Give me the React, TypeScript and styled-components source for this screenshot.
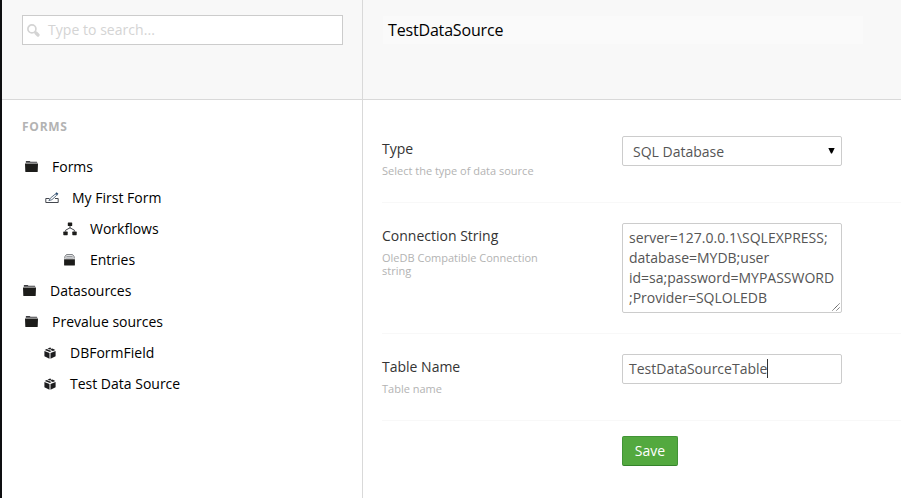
import React from 'react';
import styled, { createGlobalStyle } from 'styled-components';

const GlobalStyle = createGlobalStyle`
  *, *::before, *::after { box-sizing: border-box; }
  body {
    margin: 0;
    background: #fff;
    overflow: hidden;
    font-family: 'Open Sans', 'Noto Sans', sans-serif;
    font-size: 14px;
    line-height: 20px;
    color: #000;
  }
`;

const Shell = styled.div`
  display: grid;
  grid-template-columns: 2px 361px 1fr;
  width: 100vw;
  height: 100vh;
`;

const Rail = styled.div`
  background: #0e0f11;
`;

const Sidebar = styled.aside`
  border-right: 1px solid #d9d9d9;
`;

const Header = styled.header`
  height: 100px;
  background: #f8f8f8;
  border-bottom: 1px solid #d9d9d9;
  padding: 15px 19px 0 20px;
`;

const TitleHeader = styled(Header)`
  padding: 16px 38px 0 20px;
`;

const SearchBox = styled.div`
  display: flex;
  align-items: center;
  width: 321px;
  height: 30px;
  padding-left: 4px;
  background: #fff;
  border: 1px solid #ccc;
  color: #d4d4d4;

  svg { margin-top: 1px; }
`;

const SearchText = styled.span`
  margin-left: 8px;
  letter-spacing: 0.04px;
`;

const Title = styled.div`
  height: 28px;
  padding: 4px 5px;
  background: #fafafa;
  font-size: 16px;
  line-height: 20px;
  letter-spacing: -0.17px;
`;

const Section = styled.h5`
  margin: 17px 0 14px 20px;
  font-size: 12px;
  line-height: 20px;
  font-weight: 700;
  letter-spacing: 0.75px;
  color: #b3b3b3;
`;

const Tree = styled.ul`
  margin: 0;
  padding: 0;
  list-style: none;
`;

const Node = styled.li<{ $indent: number; $gap: number }>`
  display: flex;
  align-items: center;
  height: 31px;
  padding-left: ${(p) => p.$indent}px;
  gap: ${(p) => p.$gap}px;

  svg { flex: none; }
`;

const Main = styled.main`
  min-width: 0;
`;

const Form = styled.div`
  padding: 16px 0 0 19px;
`;

const Row = styled.div<{ $height: number }>`
  display: flex;
  height: ${(p) => p.$height}px;
  padding-top: 20px;
  border-bottom: 1px solid #f8f8f8;
`;

const LabelColumn = styled.div`
  width: 240px;
  padding-top: 3px;
`;

const Label = styled.div`
  color: #343434;
`;

const Help = styled.div`
  width: 170px;
  margin-top: 5px;
  font-size: 11px;
  line-height: 13px;
  color: #b3b3b3;
`;

const Control = styled.div<{ $tall?: boolean }>`
  position: relative;
  width: 220px;
  height: ${(p) => (p.$tall ? 90 : 30)}px;
  padding: 4px 6px;
  background: #fff;
  border: 1px solid #ccc;
  border-radius: 2px;
  color: #555;
  white-space: pre;
`;

const Select = styled(Control)`
  display: flex;
  justify-content: space-between;
  padding: 5px 6px 0 10px;

  svg { margin-top: 6px; }
`;

const TextInput = styled(Control)`
  display: flex;
`;

const Caret = styled.span`
  width: 1px;
  height: 19px;
  background: #333;
`;

const Grip = styled.svg`
  position: absolute;
  right: 1px;
  bottom: 1px;
`;

const Actions = styled.div`
  padding: 15px 0 0 240px;
`;

const SaveButton = styled.button`
  display: block;
  width: 56px;
  height: 30px;
  padding: 0;
  border: 1px solid #429436;
  border-bottom-color: #34832b;
  border-radius: 2px;
  background: #53a93f;
  color: #fff;
  font: inherit;
`;

const SearchIcon = () => (
  <svg width="13" height="13" viewBox="0 0 13 13" fill="none" stroke="#d4d4d4">
    <circle cx="4.9" cy="4.9" r="4" strokeWidth="1.7" />
    <path d="M7.7 7.7l1.6 1.6" strokeWidth="2" />
    <path d="M9 9l2 2" strokeWidth="3.2" strokeLinecap="round" />
  </svg>
);

const FolderIcon = () => (
  <svg width="13" height="11" viewBox="0 0 13 11" fill="#1c1c1a">
    <path d="M.8 1.8V.5q0-.5.5-.5h3.4l.8.7h6.2q.5 0 .5.5v.6z" fill="#3c3c40" />
    <path d="M0 2.4h13l-.3 8q0 .6-.6.6H.9q-.6 0-.6-.6z" />
  </svg>
);

const FormIcon = () => (
  <svg width="14" height="12" viewBox="0 0 14 12" fill="none" stroke="#44474e">
    <path d="M4.4 6.5H.8v4h12.4v-4H10" />
    <path d="M3.9 8.6l1.5-2.5 5-4.1 1.3 1.3-4.8 4.4z" stroke="#4a5f76" strokeWidth=".9" />
    <path d="M10.9.9l1.9 1.6" strokeWidth="1.8" stroke="#2c4f74" />
  </svg>
);

const WorkflowIcon = () => (
  <svg width="14" height="14" viewBox="0 0 14 14" fill="#1c1c1a">
    <rect x="4.8" y=".5" width="4.4" height="3.5" rx=".6" />
    <rect x=".3" y="9.6" width="4.4" height="3.6" rx=".6" />
    <rect x="9.3" y="9.6" width="4.4" height="3.6" rx=".6" />
    <path d="M7 4v2.2M2.6 9.6V8.2L7 5.8l4.4 2.4v1.4" fill="none" stroke="#44464c" />
  </svg>
);

const EntriesIcon = () => (
  <svg width="11" height="12" viewBox="0 0 11 12" fill="#1c1c1a">
    <path d="M.1 5.2h10.8V11q0 .6-.6.6H.7q-.6 0-.6-.6z" />
    <path d="M2.4.7h6.2l1.5 2v2M.9 4.7v-2l1.5-2" fill="none" stroke="#55585e" strokeWidth=".9" />
    <path d="M2.3 2.6h6.4M1.9 4.1h7.2" stroke="#70737a" strokeWidth=".8" />
  </svg>
);

const BoxIcon = () => (
  <svg width="12" height="12" viewBox="0 0 12 12" fill="#1c1c1e">
    <path d="M.4 3.9l5.1 2.2v5.7L.4 9.3zM11.6 3.9L6.5 6.1v5.7l5.1-2.5z" />
    <path d="M.7 3l2-.9 4.6 2L6 5zM3.5 1.8L6 .5l1.7.8-2.1 1.2zM8.5 1.6l2.8 1.3-2.4 1.1-2.8-1.2z" />
  </svg>
);

const nodes = [
  { text: 'Forms', Icon: FolderIcon, indent: 23, gap: 14 },
  { text: 'My First Form', Icon: FormIcon, indent: 43, gap: 13 },
  { text: 'Workflows', Icon: WorkflowIcon, indent: 61, gap: 13 },
  { text: 'Entries', Icon: EntriesIcon, indent: 62, gap: 15 },
  { text: 'Datasources', Icon: FolderIcon, indent: 21, gap: 14 },
  { text: 'Prevalue sources', Icon: FolderIcon, indent: 23, gap: 14 },
  { text: 'DBFormField', Icon: BoxIcon, indent: 42, gap: 14 },
  { text: 'Test Data Source', Icon: BoxIcon, indent: 42, gap: 14 },
];

const connection = [
  'server=127.0.0.1\\SQLEXPRESS;',
  'database=MYDB;user',
  'id=sa;password=MYPASSWORD',
  ';Provider=SQLOLEDB',
].join('\n');

function Field(props: { label: string; help: string; height: number; children: React.ReactNode }) {
  return (
    <Row $height={props.height}>
      <LabelColumn>
        <Label>{props.label}</Label>
        <Help>{props.help}</Help>
      </LabelColumn>
      {props.children}
    </Row>
  );
}

export default function App() {
  return (
    <>
      <GlobalStyle />
      <Shell>
        <Rail />
        <Sidebar>
          <Header>
            <SearchBox>
              <SearchIcon />
              <SearchText>Type to search...</SearchText>
            </SearchBox>
          </Header>
          <Section>FORMS</Section>
          <Tree>
            {nodes.map(({ text, Icon, indent, gap }) => (
              <Node key={text} $indent={indent} $gap={gap}>
                <Icon />
                <span>{text}</span>
              </Node>
            ))}
          </Tree>
        </Sidebar>
        <Main>
          <TitleHeader>
            <Title>TestDataSource</Title>
          </TitleHeader>
          <Form>
            <Field label="Type" help="Select the type of data source" height={87}>
              <Select>
                SQL Database
                <svg width="7" height="6" viewBox="0 0 7 6"><path d="M.3 0h6.4L4 5.5H3z" /></svg>
              </Select>
            </Field>
            <Field label="Connection String" help="OleDB Compatible Connection string" height={131}>
              <Control $tall>
                {connection}
                <Grip width="8" height="8" viewBox="0 0 8 8" stroke="#555" strokeDasharray="1.4 .3">
                  <path d="M.5 7.5l7-7M4.5 7.5l3-3" />
                </Grip>
              </Control>
            </Field>
            <Field label="Table Name" help="Table name" height={87}>
              <TextInput>
                TestDataSourceTable
                <Caret />
              </TextInput>
            </Field>
            <Actions>
              <SaveButton type="button">Save</SaveButton>
            </Actions>
          </Form>
        </Main>
      </Shell>
    </>
  );
}
